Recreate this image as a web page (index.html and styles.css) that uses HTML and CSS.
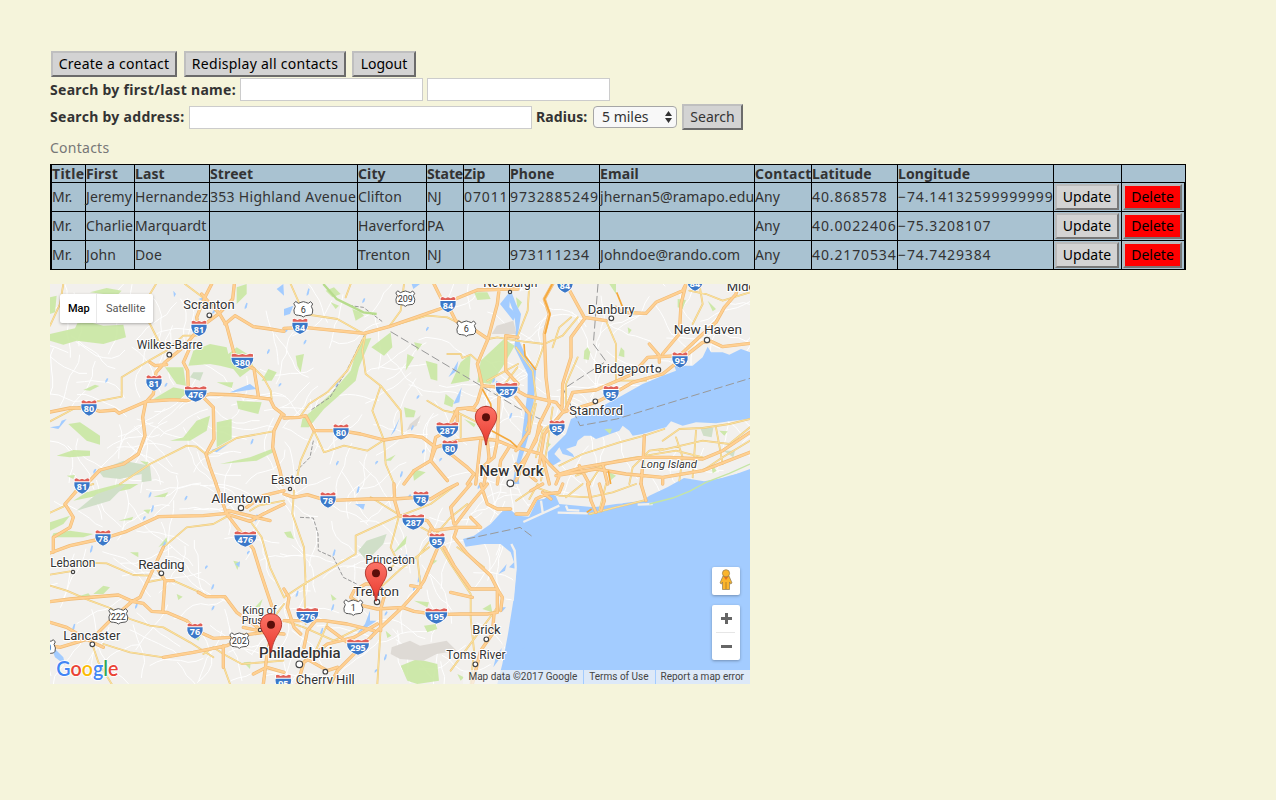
FILE: index.html
```html
<!DOCTYPE html>
<html lang="en">
<head>
<meta charset="utf-8">
<title>Contacts</title>
<link rel="stylesheet" href="styles.css">
</head>
<body>
<div class="toolbar">
  <button class="btn w-create">Create a contact</button>
  <button class="btn w-all">Redisplay all contacts</button>
  <button class="btn w-logout">Logout</button>
</div>
<form class="search">
  <div class="row"><label class="l-name">Search by first/last name:</label><input class="name"><input class="name"></div>
  <div class="row second"><label class="l-addr">Search by address:</label><input class="addr"><label class="l-rad">Radius:</label>
    <div class="select"><span>5 miles</span><svg width="7" height="12" viewBox="0 0 7 12"><path d="M0 5 3.5 0 7 5ZM0 7 3.5 12 7 7Z"/></svg></div>
    <button type="button" class="btn find">Search</button></div>
</form>
<div class="caption">Contacts</div>
<table class="contacts">
<colgroup><col class="c1"><col class="c2"><col class="c3"><col class="c4"><col class="c5"><col class="c6"><col class="c7"><col class="c8"><col class="c9"><col class="c10"><col class="c11"><col class="c12"><col class="c13"><col class="c14"></colgroup>
<tr class="head"><th class="wide">Title</th><th>First</th><th>Last</th><th>Street</th><th>City</th><th class="tight">State</th><th>Zip</th><th>Phone</th><th>Email</th><th class="wide">Contact</th><th>Latitude</th><th>Longitude</th><th></th><th></th></tr>
<tr><td>Mr.</td><td>Jeremy</td><td>Hernandez</td><td class="wide">353 Highland Avenue</td><td>Clifton</td><td>NJ</td><td class="num">07011</td><td class="num">9732885249</td><td>jhernan5@ramapo.edu</td><td>Any</td><td class="num">40.868578</td><td class="num">−74.14132599999999</td><td><button class="btn upd">Update</button></td><td><button class="btn del">Delete</button></td></tr>
<tr><td>Mr.</td><td>Charlie</td><td>Marquardt</td><td></td><td>Haverford</td><td>PA</td><td></td><td></td><td></td><td>Any</td><td class="num">40.0022406</td><td class="num">−75.3208107</td><td><button class="btn upd">Update</button></td><td><button class="btn del">Delete</button></td></tr>
<tr><td>Mr.</td><td>John</td><td>Doe</td><td></td><td>Trenton</td><td>NJ</td><td></td><td class="num">973111234</td><td>Johndoe@rando.com</td><td>Any</td><td class="num">40.2170534</td><td class="num">−74.7429384</td><td><button class="btn upd">Update</button></td><td><button class="btn del">Delete</button></td></tr>
</table>

<div class="map">
<svg class="canvas" width="700" height="400" viewBox="0 0 2100 1200">
<defs>
<symbol id="i2" viewBox="0 0 50 50" overflow="visible"><path fill="#fff" d="M1 2 8 0 17 4 25 1 33 4 42 0 49 2 50 15Q52 40 25 50Q-2 40 0 15Z"/><path fill="#e06058" d="M3 4 9 2 17 6 25 3 33 6 41 2 47 4V11H3Z"/><path fill="#3b78c8" d="M2 14H48Q51 38 25 48Q-1 38 2 14Z"/></symbol>
<symbol id="i3" viewBox="0 0 70 50" overflow="visible"><path fill="#fff" d="M1 2 12 0 24 4 35 1 46 4 58 0 69 2 70 15Q70 40 35 50Q0 40 0 15Z"/><path fill="#e06058" d="M3 4 12 2 24 6 35 3 46 6 58 2 67 4V11H3Z"/><path fill="#3b78c8" d="M2 14H68Q69 38 35 48Q1 38 2 14Z"/></symbol>
<symbol id="us" viewBox="0 0 60 50" overflow="visible"><path fill="#fff" stroke="#555" stroke-width="3" d="M8 2 15 7 23 4 30 2 37 4 45 7 52 2 58 9 54 16Q61 27 57 37Q54 44 44 43Q35 43 30 48Q25 43 16 43Q6 44 3 37Q-1 27 6 16L2 9Z"/></symbol>
<linearGradient id="red" x2="0" y2="1"><stop offset="0" stop-color="#fc7367"/><stop offset="1" stop-color="#e8392d"/></linearGradient>
<g id="pin"><path fill="url(#red)" stroke="#a92b22" stroke-width="2.5" d="M0-33C-20-33-32-18-32-1C-32 24-7 34-1 83H1C7 34 32 24 32-1C32-18 20-33 0-33Z"/><circle r="12" fill="#5b0e0a"/></g>

<g id="minor-roads">
<g><path d="M485 60 405 0M318 0 270 80 300 120 330 180M360 190 400 155 440 155M0 412 70 375 140 352 215 338 215 280 300 228 350 200M210 600 300 540 410 485 440 488 470 512 560 462 670 442M600 240 640 280 662 320 665 345M0 125 30 60 40 0"/></g>
<g transform="translate(702)"><path d="M245 148 235 200 245 270 290 305 265 380 300 468 305 540 330 600M20 0 60 90 160 105 240 150M290 305 350 380 355 450M200 0 185 40M315 128 350 80 360 0M240 160 190 260 130 325 75 360 50 395M90 440 120 505 180 485 250 500 300 468M90 440 50 530 35 600M430 350 480 380 530 390 530 460M315 128 430 95 490 100 550 130M490 210 530 210 535 222 560 212 580 230M610 290 702 240M612 165 640 160 702 170M510 380 590 420M700 250 640 330"/></g>
<g transform="translate(1398)"><path d="M40 0 35 80 0 170 85 180 140 155 185 100M270 110 300 180 300 290 330 290 390 290M0 190 50 260 60 340 30 440M85 180 60 250M165 100 130 130 110 190M185 220 150 300 150 380M520 20 570 30 620 50 702 25M130 545 200 510 310 475 385 455 445 435M440 470 490 435 560 432 640 420 702 405M430 500 560 470 640 480 702 430M180 575 300 530 480 500 560 520M220 600 260 540M560 560 620 520 702 470M340 600 350 550 400 500 440 495M130 400 80 440 60 520M110 370 95 480 75 590M60 360 40 450M550 0 560 60 530 120M480 460 500 520 490 590M540 440 530 580M600 430 620 540"/></g>
<g transform="translate(0 600)"><path d="M0 86 40 68 80 15 130 0M340 190 410 130 490 120 530 98M0 272 60 262M80 235 170 238 250 273 300 275M0 305 50 320 120 350 180 372 240 405 300 425 340 430 420 475 490 520M290 295 340 285M370 290 450 325M127 481 145 535 185 600M160 480 240 505 340 520M600 110 635 160 660 250 702 340M520 510 575 540 700 530M520 545 540 600M460 510 490 490 520 510M600 80 625 65 702 50M702 360 665 410"/></g>
<g transform="translate(702 600)"><path d="M30 20 25 90 60 190 65 300M0 340 60 300 215 210 215 155 345 95M345 95 320 190 340 230 318 255M260 40 350 95 440 60 520 0M60 300 65 420M435 190 350 255 290 310M470 190 500 240 560 330 560 400M345 95 430 140M290 430 280 600M550 60 500 100 430 180 400 220 410 310M0 410 60 430 150 470 230 430M130 420 95 500 50 540M560 400 570 500 560 600M500 560 640 370M600 250 520 190"/></g>
<g transform="translate(1398 600)"><path d="M0 50 60 10 130 35 220 40 290 25 360 0M220 90 300 70 390 48M150 40 200 0M270 0 250 80M65 0 40 45"/></g>
</g>

<g id="highways">
<g><path d="M485 0 462 45 440 100 447 135 400 190 345 235 318 265 310 330 287 355 278 400 285 455 265 510 220 540 150 558 110 600M553 0 548 45 508 88 445 135M455 30 485 65 508 88M0 384 60 372 115 372 150 382 195 378 207 388 290 352 370 347 410 350 480 330 560 333 660 345 672 370 702 393M455 335 490 370 492 465 468 510 480 550 498 598M415 320 413 260 400 235 420 190M508 88 530 125 550 200 560 230 612 255 625 335M525 120 555 95 610 128 660 135 702 142M695 393 672 440 668 490 690 560 698 600M300 235 315 245 350 242"/></g>
<g transform="translate(702)"><path d="M0 133 60 130 240 148 315 128 475 72 490 55 580 18 702 15M450 0 475 50M490 60 515 110 575 140 612 165M645 18 640 60 612 165 580 240 595 305M702 315 595 305 580 355 570 370 520 375 490 440 455 460 440 530 390 560 360 600M0 402 45 400 65 395 90 440 170 440 230 450 300 468 380 455 415 460 455 490 520 470 590 462 640 470 702 495M440 530 490 590M500 510 550 550 570 570 550 600M665 155 665 260 702 300M702 160 665 155M645 340 640 470M590 470 580 560 575 600M610 470 615 520 600 600M455 490 440 530M520 375 520 420 480 440M640 470 630 520 600 545M550 375 580 380M675 490 650 530 640 600"/></g>
<g transform="translate(1398)"><path d="M0 318 30 335 120 355 140 380M70 540 85 450 140 385 240 355 290 330 350 295 440 270 490 230 560 175 585 172 620 188 702 178M150 375 170 325 240 318 350 270 395 220 490 215 560 150 600 115 625 70 660 30 668 0M150 0 205 100 270 110M300 70 320 85 390 88 420 55 500 20 510 0M510 0 495 60 490 150 440 210M205 105 165 160 165 220 140 300 138 370M110 0 85 45 100 90 85 150 90 280 100 360M400 180 430 215 430 235M100 360 70 420 60 470 30 520 0 560M0 490 75 510 100 540 130 570 200 550 260 540 380 520 460 520 560 525 620 500 702 445M120 575 240 555 330 570 440 580 560 560 702 505M385 455 382 520 375 600M0 340 40 390 40 440 0 500M75 430 0 590M80 520 100 600M260 540 275 600M190 545 220 600M440 580 440 600M130 575 120 600M0 540 60 590"/></g>
<g transform="translate(0 600)"><path d="M90 0 85 15 45 60 70 100 60 130 10 160 10 205M0 207 60 185 165 162 230 142 325 98 460 95 530 88 535 80 660 110M498 0 530 90 580 155 610 195 630 260 665 365M530 90 600 112 640 90 702 60M590 70 640 35 702 20M0 353 60 345 205 333 250 353 280 358 305 382 350 385 410 410 440 440 490 463 540 460 640 445 702 450M340 190 305 265 270 340 245 353 180 410 130 460 30 490 0 485M0 415 50 430 127 475 160 490M320 250 345 290 370 290M345 290 338 385M445 325 470 338 525 338 560 385 610 420 640 445M340 520 430 505 530 485 560 470M520 485 520 550M610 570 650 550 702 565M580 430 625 440M665 445 650 520 640 600"/></g>
<g transform="translate(702 600)"><path d="M0 30 30 40 70 32 130 50 250 45 330 45 400 40 440 45 490 15 520 0M330 0 332 50 345 95 430 110 450 140 520 130 590 130 560 100M440 135 435 150 450 170M520 130 510 160 550 210 620 275 640 315 640 385M640 315 655 340 650 380M470 170 420 290 400 320 355 370 280 440 160 560 140 600M640 385 610 390 530 390 460 392 390 382 355 370 280 375 235 365 200 340 210 320 245 300 290 300 300 340 290 375 290 440M0 410 40 410 120 410 190 420 270 440M95 410 70 440 60 490M0 315 15 340 10 370 30 430 50 450M130 430 190 475M280 420 210 460 130 480 60 535 40 600M630 390 625 450 590 500 575 560 565 600M640 315 560 315 510 245 480 190M560 0 500 70 510 120M610 0 560 60 515 120M590 0 610 60 640 75 680 75M500 325 565 340M380 305 410 310M60 520 130 560 160 550"/></g>
<g transform="translate(1398 600)"><path d="M0 90 35 90 60 45 90 30 130 25 140 0M215 0 225 50 240 85M250 0 265 50 255 80M375 0 390 50M45 20 80 0M80 25 105 45"/></g>
</g>
</defs>
<rect width="2100" height="1200" fill="#f2f0ed"/>
<g id="streets" class="street"></g>
<g class="green">
<path d="M0 150 75 133 82 118 120 115 160 125 220 122 228 160 160 180 80 170 40 182 0 170ZM0 40 20 35 15 85 0 90ZM120 25 170 12 215 20 200 35ZM100 318 135 302 148 306 120 320ZM55 420 90 415 150 455 150 482 110 470ZM20 515 70 498 120 500 120 515 60 520ZM360 470 400 460 440 410 480 395 470 440 420 470ZM500 415 545 405 545 465 500 490ZM430 200 480 180 530 190 535 210 560 190 600 215 610 250 570 280 550 255 510 245 480 240 415 245ZM345 250 400 250 408 305 380 300ZM310 345 370 310 420 320 390 345ZM510 540 600 520 665 495 670 505 620 530ZM560 10 590 0 590 30 560 60ZM560 350 635 355 625 390 565 375ZM270 530 295 535 290 545ZM635 290 655 255 680 265 665 290ZM500 295 550 295 545 312ZM50 575 75 573 70 585Z"/>
<path transform="translate(702)" d="M240 165 262 162 225 250 215 290 120 375 75 430 50 430 55 405 140 330 200 260 220 190ZM320 145 325 190 300 215 262 190ZM660 165 692 185 655 250 620 300 580 295 590 230ZM530 235 560 210 555 290 500 300ZM360 370 395 380 390 400 365 400ZM205 75 230 85 240 95 215 110ZM35 215 60 210 50 265 40 245ZM125 20 150 10 170 30 145 40ZM425 230 460 240 460 290 440 285ZM570 25 610 25 620 45 580 48ZM370 210 390 220 365 260ZM390 175 415 180 400 200ZM485 330 510 350 505 370 480 360ZM385 555 425 565 390 590ZM300 530 335 512 320 530ZM140 55 165 65 155 75ZM540 405 575 420 570 430Z"/>
<path transform="translate(1398)" d="M315 190 325 200 325 220 308 215ZM205 200 215 190 223 205 218 228 203 225ZM485 45 510 48 500 75 485 70ZM335 130 347 138 338 150ZM575 50 600 75 590 82ZM280 0 300 0 300 30ZM610 440 635 442 625 455ZM0 40 18 55 5 75ZM280 565 300 575 285 588ZM585 540 602 560 590 568ZM90 475 105 480 95 492Z"/>
<path transform="translate(0 600)" d="M0 115 60 95 40 120 0 140ZM10 148 60 140 130 150 100 160 5 160ZM205 110 250 98 245 108ZM70 50 110 25 205 0 265 0 240 15ZM310 38 355 25 345 40ZM240 205 265 205 265 220ZM325 190 350 160 352 175ZM130 330 160 305 180 310 160 330ZM380 330 398 338 385 348ZM580 535 602 533 600 555ZM60 345 115 328 130 345ZM280 78 302 76 295 90ZM615 370 638 345 630 368ZM430 460 455 450 445 470ZM550 230 570 235 562 258Z"/>
<path transform="translate(702 600)" d="M350 545 400 525 460 540 465 590 400 600 370 590ZM390 350 435 355 430 370ZM420 425 455 420 460 435 430 445ZM0 145 20 142 30 165 10 160ZM325 210 368 155 365 180ZM140 330 158 345 145 350ZM595 375 620 360 625 385ZM305 440 322 455 310 462ZM520 570 540 580 530 590ZM440 225 460 230 440 245Z"/>
</g>
<path class="park" d="M145 560 220 530 300 545 305 590 275 595 275 570 210 585 160 580ZM430 265 460 265 450 290 420 280ZM80 680 140 630 230 600 180 650ZM925 800 950 770 1010 750 1000 780 950 830ZM1950 430 1990 432 1985 460 1960 455ZM2020 500 2055 500 2050 520Z"/>
<path class="urban" d="M1325 150 1340 125 1390 110 1400 150ZM1070 440 1080 420 1113 393 1100 425ZM1025 1090 1080 1070 1110 1085 1190 1070 1220 1100 1160 1110 1120 1130 1050 1125 1022 1110Z"/>
<g class="water">
<path transform="translate(1398)" d="M95 505 150 450 165 405 200 390 215 388 300 345 380 300 440 275 480 260 475 245 530 245 560 220 575 188 585 205 620 205 640 212 675 195 702 205V405L650 410 600 418 540 415 500 425 465 412 450 430 430 435 380 450 350 455 340 440 320 425 310 440 240 465 225 455 205 455 185 470 180 485 150 495 170 510 175 520 140 510 130 490 115 510 135 530 110 545 98 540Z"/>
<path transform="translate(1398)" d="M-15 20 0 60 15 90 5 160 40 240 60 260 55 330 45 430 25 500 5 560 10 600-10 600 0 540 15 480 25 400 35 320 35 270-5 190 0 140-5 90-20 50ZM702 560 640 575 560 600 540 640 702 640Z"/>
<path transform="translate(702 600)" d="M1398-45 1330-20 1260-8 1200-18 1150 10 1096 35 1076 50 996 60 930 70 826 60 815 35 800 30 780 45 760 48 735 98 702 95 680 78 655 82 620 120 570 155 537 165 545 188 600 180 650 180 680 205 690 235 675 250 697 255 688 350 672 450 655 540 640 600H1398Z"/>
<path d="M484 498 535 480 500 505ZM0 430 28 425 35 410 50 405 25 435ZM540 325 600 300 620 315 550 325ZM0 1080 40 1120 45 1142 15 1120ZM325 810 345 770 348 780ZM702 75 730 65 720 90 702 95ZM1195 280 1225 230 1220 260ZM1022 455 1050 400 1035 440ZM1210 360 1235 310 1228 355ZM445 45 460 40 470 55ZM1110 0 1090 15 1085 0ZM915 660 945 660 940 677ZM945 1020 960 980 960 1010 980 1010 920 1050ZM1345 870 1370 840 1365 860ZM1350 970 1368 970 1355 985ZM1340 1110 1358 1090 1352 1120 1330 1150ZM370 20 378 30 372 40ZM680 15 702 35 700 0ZM556 840 570 832 568 850ZM1350 60 1382 20 1378 70 1400 90 1390 110Z"/>
</g>
<path class="green" d="M1663 435 1686 434 1680 450Z"/>
<g id="ponds" class="water"></g>
<g transform="translate(1398 600)" class="spit"><path d="M22 114 75 90 130 65M125 86 215 88M365 62 410 60M150 65 155 78 190 80M280 52 320 55M75 50 80 85"/><path class="gline" d="M220 92 300 70M400 60 470 42 520 22 570-5 640-32 702-60"/></g>
<path class="spit" d="M1384 780 1394 800 1397 850 1388 950M1370 1030 1350 1140"/>
<path class="border" d="M1022 143 1404 372 1480 410M1644 0 1630 180 1668 232 1540 315 1590 425 1700 405 2100 283M1250 765 1390 735M1392 735 1410 730 1450 760"/>
<path class="border curly" d="M750 700 790 702 804 750 805 800 850 820 880 880 920 900M820 0 860 45 900 65 940 70 1000 115M945 150 890 260 840 340 780 380M790 470 780 520 740 560"/>
<path class="trail" d="M820 0 860 45 900 65 940 85 980 90"/>
<use href="#minor-roads" class="minor-case"/><use href="#minor-roads" class="minor-fill"/>
<use href="#highways" class="hw-case"/><use href="#highways" class="hw-fill"/>
<path class="toll" d="M1507 0 1483 45 1500 90 1485 150M1422 180 1425 215 1458 258M1297 315 1322 360 1325 385M1325 440 1380 470 1402 490M1700 25 1718 70M1675 560 1682 600M1610 685 1625 675"/>

<g class="dots">
<circle cx="478" cy="94" r="7"/><circle cx="358" cy="212" r="7"/><circle cx="1380" cy="24" r="5"/><circle cx="1684" cy="103" r="7"/><circle cx="1971" cy="168" r="8"/><circle cx="1825" cy="257" r="7"/><circle cx="1636" cy="352" r="7"/><circle cx="1381" cy="598" r="10"/><circle cx="720" cy="615" r="5"/><circle cx="573" cy="672" r="8"/><circle cx="334" cy="868" r="7"/><circle cx="69" cy="864" r="5"/><circle cx="127" cy="1081" r="7"/><circle cx="630" cy="1038" r="5"/><circle cx="748" cy="1141" r="10"/><circle cx="826" cy="1163" r="7"/><circle cx="1020" cy="855" r="5"/><circle cx="981" cy="954" r="8"/><circle cx="1309" cy="1066" r="7"/><circle cx="1276" cy="1141" r="7"/>
</g>
<g id="shields" class="shields"></g>
<g class="labels">
<text x="400" y="76" textLength="154">Scranton</text><text x="260" y="195" textLength="198" font-size="36">Wilkes-Barre</text><text x="1300" y="9" textLength="162" font-size="36">Newburgh</text><text x="1613" y="90" textLength="141">Danbury</text><text x="1871" y="149" textLength="205" font-size="41">New Haven</text><text x="1633" y="268" textLength="180">Bridgeport</text><text x="1558" y="393" textLength="161">Stamford</text><text x="2030" y="22">Middletown</text><text x="1773" y="553" textLength="168" font-size="34" font-style="italic">Long Island</text><text class="city" x="1288" y="576" textLength="193">New York</text><text x="663" y="599" textLength="109" font-size="36">Easton</text><text x="484" y="656" textLength="178" font-size="41">Allentown</text><text x="265" y="854" textLength="139" font-size="41">Reading</text><text x="1" y="849" textLength="135" font-size="36">Lebanon</text><text x="40" y="1067" textLength="171">Lancaster</text><text x="577" y="990" textLength="103" font-size="33">King of</text><text x="575" y="1021" textLength="103" font-size="33">Prussia</text><text class="city" x="627" y="1121" textLength="245">Philadelphia</text><text x="946" y="839" textLength="149" font-size="36">Princeton</text><text x="910" y="935" textLength="137" font-size="41">Trenton</text><text x="1267" y="1050" textLength="85">Brick</text><text x="1189" y="1125" textLength="178" font-size="36">Toms River</text><text x="737" y="1199" textLength="177">Cherry Hill</text><text x="-8" y="942" font-size="34">,</text>
</g>
<use href="#pin" x="1308" y="400"/><use href="#pin" x="978" y="868"/><use href="#pin" x="663" y="1022"/>
<text class="logo" x="19" y="1177" textLength="186" lengthAdjust="spacingAndGlyphs"><tspan fill="#4285f4">G</tspan><tspan fill="#ea4335">o</tspan><tspan fill="#fbbc05">o</tspan><tspan fill="#4285f4">g</tspan><tspan fill="#34a853">l</tspan><tspan fill="#ea4335">e</tspan></text>
</svg>
<div class="types"><span class="on">Map</span><span>Satellite</span></div>
<div class="controls">
  <div class="pegman"><svg width="14" height="22" viewBox="0 0 14 22"><path fill="#fbb52c" stroke="#8d7a55" stroke-width=".7" d="M4 7H10L13 14 11.5 15 10.5 13V20.5H3.5V13L2.5 15 1 14Z"/><path d="M7 13V20" stroke="#b88224"/><path fill="#e9711c" d="M4.5 7.5H9.5L7 11Z"/><circle cx="7" cy="4.3" r="3.6" fill="#fbb52c" stroke="#8d7a55" stroke-width=".7"/></svg></div>
  <div class="zoom"><svg width="28" height="55" viewBox="0 0 28 55"><path d="M9 13.5H20M14.5 8V19M9 41.5H20" stroke="#666" stroke-width="3"/><path d="M4 27.5H23" stroke="#e6e6e6"/></svg></div>
</div>
<div class="legal"><span>Map data ©2017 Google</span><span>Terms of Use</span><span>Report a map error</span></div>
</div>
<script src="map.js"></script>
</body>
</html>
```

FILE: styles.css
```css
* { box-sizing: border-box; }
body { margin: 0; padding: 51px 50px 0; background: #f5f4db; color: #333; font: 14px/18px "Noto Sans", "Open Sans", sans-serif; }
.toolbar { display: flex; gap: 6px; padding-left: 1px; height: 27px; }
.btn { font: inherit; letter-spacing: 0; color: #000; background: #d3d3d3; border: 2px solid; border-color: #bfbfbf #6b6b6b #6b6b6b #bfbfbf; padding: 0; height: 26px; white-space: nowrap; display: block; }
.w-create { width: 126px; margin-right: 1px; letter-spacing: .25px; }
.w-all { width: 162px; letter-spacing: .27px; }
.w-logout { width: 64px; }
.row { display: flex; align-items: center; height: 23px; white-space: nowrap; }
.second { height: 26px; margin-top: 3px; }
label { font-weight: bold; letter-spacing: .3px; }
.l-name { width: 190px; }
.l-addr { width: 139px; }
.l-rad { width: 57px; margin-left: 4px; letter-spacing: .1px; }
input { height: 23px; border: 1px solid #ccc; background: #fff; padding: 0; margin: 0; border-radius: 0; }
.name { width: 183px; margin-right: 4px; }
.addr { width: 343px; }
.select { width: 84px; height: 22px; border: 1px solid #a6a6a6; border-radius: 4px; background: #f8f8f8; display: flex; align-items: center; justify-content: space-between; padding: 0 4px 0 8px; margin-right: 5px; }
.select svg { fill: #333; }
.find { width: 61px; color: #333; }
.caption { height: 34px; padding-top: 9px; color: #777; letter-spacing: .25px; }
.contacts { border-collapse: collapse; table-layout: fixed; width: 1135px; background: #a9c2d1; }
th, td { border: 1px solid #000; padding: 0; height: 29px; text-align: left; white-space: nowrap; letter-spacing: .12px; }
.head th { height: 18px; line-height: 17px; }
.contacts .wide { letter-spacing: .3px; }
.contacts .tight { letter-spacing: -.1px; }
.contacts .num { letter-spacing: .87px; }
th:first-child, td:first-child { box-shadow: inset 1px 0 #000; padding-left: 1px; }
td:last-child { box-shadow: inset -1px 0 #000; }
.c1 { width: 35px; } .c2 { width: 49px; } .c3 { width: 75px; } .c4 { width: 148px; } .c5 { width: 69px; } .c6 { width: 37px; } .c7 { width: 46px; } .c8 { width: 90px; } .c9 { width: 155px; } .c10 { width: 57px; } .c11 { width: 86px; } .c12 { width: 156px; } .c13 { width: 68px; } .c14 { width: 64px; }
.upd { width: 64px; margin-left: 1px; border-color: #bbb #777 #777 #bbb; }
.del { width: 59px; margin-left: 1px; background: #f00; border-color: #bbb #777 #777 #bbb; }
.map { position: relative; width: 700px; height: 400px; margin-top: 14px; overflow: hidden; font-family: Roboto, sans-serif; }
.canvas { display: block; }
.green { fill: #cae7a5; fill-opacity: .93; }
.park { fill: #d0dfc8; }
.urban { fill: #dedad5; }
.street { fill: none; stroke: #fff; stroke-width: 3; stroke-linejoin: round; }
.water { fill: #a3ccff; }
.spit { fill: none; stroke: #f2f0ed; stroke-width: 7; }
.gline { stroke: #c5e5a5; stroke-width: 4; }
.border { fill: none; stroke: #999; stroke-width: 3; stroke-dasharray: 26 10; }
.curly { stroke-dasharray: 12 5; }
.trail { fill: none; stroke: #b7dc8d; stroke-width: 7; }
use { fill: none; stroke-linejoin: round; stroke-linecap: round; }
.minor-case { stroke: #e9c781; stroke-width: 5.5; }
.minor-fill { stroke: #fbe09b; stroke-width: 3.2; }
.hw-case { stroke: #efba76; stroke-width: 10; }
.hw-fill { stroke: #ffd092; stroke-width: 6.5; }
.toll { fill: none; stroke: #f4a93d; stroke-width: 5; stroke-linejoin: round; }
.dots { fill: #fff; stroke: #444; stroke-width: 3.5; }
.labels { font-size: 39px; fill: #333; stroke: #fff; stroke-width: 6px; paint-order: stroke; stroke-linejoin: round; }
.labels .city { font-size: 45px; font-weight: 500; }
.shields text { font: bold 27px "Noto Sans", sans-serif; text-anchor: middle; fill: #fff; }
.shields .us { font: 27px Roboto, sans-serif; fill: #333; }
.logo { font: 600 61px Lato, sans-serif; stroke: #fff; stroke-width: 5px; paint-order: stroke; }
.types { position: absolute; left: 10px; top: 10px; height: 29px; display: flex; background: #fff; border-radius: 2px; box-shadow: 0 1px 3px rgba(0,0,0,.3); font-size: 11px; line-height: 29px; color: #565656; }
.types span { padding: 0 8px 0 9px; width: 56px; }
.types .on { width: 37px; padding: 0 8px; color: #000; font-weight: 500; border-right: 1px solid #e9e9e9; }
.controls { position: absolute; right: 10px; bottom: 24px; display: flex; flex-direction: column; gap: 10px; }
.pegman, .zoom { width: 28px; background: #fff; border-radius: 2px; box-shadow: 0 1px 3px rgba(0,0,0,.3); }
.pegman { height: 28px; padding: 2px 7px; }
.zoom { height: 55px; }
.zoom svg { display: block; }
.legal { position: absolute; right: 0; bottom: 0; height: 14px; display: flex; font-size: 10px; line-height: 14px; color: #444; white-space: nowrap; }
.legal span { background: rgba(245,245,245,.7); padding: 0 6px 0 5px; }
.legal span + span { border-left: 1px solid #a3ccff; }
```

FILE: map.js
```js
const NS = "http://www.w3.org/2000/svg";
function add(parent, name, attrs, text) {
  const el = document.createElementNS(NS, name);
  for (const k in attrs) el.setAttribute(k, attrs[k]);
  if (text) el.textContent = text;
  parent.appendChild(el);
}
// Road shields: kind, number, centre x, centre y
const shields = [
  ["i2","81",447,133],["i2","81",312,297],["i2","80",117,372],["i3","476",437,330],["i3","380",577,232],["i2","81",96,606],
  ["i2","84",750,127],["i2","84",1194,62],["i3","287",1370,319],["i3","287",1192,438],["i2","80",873,444],["i2","80",1200,492],
  ["us","6",760,76],["us","209",1066,44],["us","6",1249,134],["i2","84",1545,3],["i2","84",1935,-3],["i2","95",1890,228],
  ["i2","95",1683,329],["i2","95",1521,432],["i2","78",159,762],["i3","476",586,765],["i2","76",435,1041],["us","222",205,997],
  ["us","202",568,1070],["i2","78",834,648],["i2","78",1113,645],["i3","287",1090,714],["i2","95",1161,771],["i3","276",772,995],
  ["i3","195",1159,996],["i3","295",924,1089],["us","1",910,971],["i2","95",700,1195],["us","30",-12,1090]
];
const group = document.getElementById("shields");
for (const [kind, num, x, y] of shields) {
  const w = kind === "i2" ? 50 : kind === "i3" ? 70 : 60;
  add(group, "use", { href: "#" + kind, x: x - w / 2, y: y - 25, width: w, height: 50 });
  add(group, "text", kind === "us" ? { x, y: y + 10, class: "us" } : { x, y: y + 13 }, num);
}
// Local streets and small ponds, placed from a fixed seed
let seed = 41;
const rnd = () => (seed = (seed * 16807) % 2147483647) / 2147483647;
let d = "";
for (let i = 0; i < 330; i++) {
  let x = rnd() * 2100, y = rnd() * 1200, a = rnd() * 6.28;
  d += `M${x | 0} ${y | 0}`;
  for (let j = 0; j < 7; j++) {
    a += (rnd() - 0.5) * 0.9;
    x += Math.cos(a) * 24; y += Math.sin(a) * 24;
    d += `L${x | 0} ${y | 0}`;
  }
}
add(document.getElementById("streets"), "path", { d });
let p = "";
for (let i = 0; i < 60; i++) {
  const x = rnd() * 1500 | 0, y = rnd() * 1180 | 0, h = 5 + rnd() * 12 | 0;
  p += `M${x} ${y}l5 ${-h} 4 2 -3 ${h} -6 5Z`;
}
add(document.getElementById("ponds"), "path", { d: p });
```
